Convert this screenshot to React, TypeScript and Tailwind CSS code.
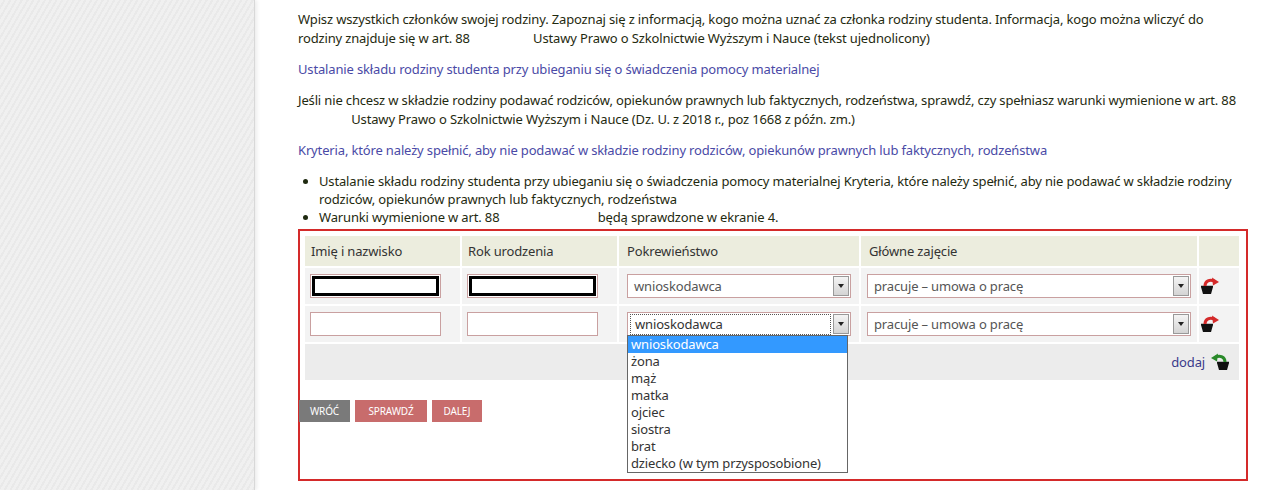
const font = { fontFamily: '"Noto Sans", "DejaVu Sans", sans-serif' };

function Arrow({ color, flip }: { color: string; flip?: boolean }) {
  return (
    <svg width="22" height="20" viewBox="0 0 22 20" style={flip ? { transform: "scaleX(-1)" } : undefined}>
      <path d="M2 11 h12 l-2 7 h-8 z" fill="#111" />
      <path d="M2 10.5 h12" stroke="#111" strokeWidth="1.5" />
      <path d="M6 10 C6 5 11 3 15 5" stroke={color} strokeWidth="3" fill="none" />
      <path d="M13 1.5 L20 6 L14 9.5 z" fill={color} />
    </svg>
  );
}

function Select({ value, focus }: { value: string; focus?: boolean }) {
  return (
    <div className="flex h-[24px] items-center border border-[#c9a0a0] bg-white">
      <div className={`flex-1 mx-[2px] px-[4px] text-[13px] ${focus ? "border border-dotted border-[#555] text-[#333]" : "text-[#555]"}`}>{value}</div>
      <div className="flex h-[20px] w-[16px] mr-[1px] items-center justify-center border border-[#999] bg-gradient-to-b from-[#f4f4f4] to-[#d4d4d4]">
        <div className="h-0 w-0 border-l-[3px] border-r-[3px] border-t-[4px] border-l-transparent border-r-transparent border-t-[#222]" />
      </div>
    </div>
  );
}

export default function App() {
  const options = ["wnioskodawca", "żona", "mąż", "matka", "ojciec", "siostra", "brat", "dziecko (w tym przysposobione)"];
  return (
    <div className="flex h-[490px] w-[1280px] overflow-hidden bg-white text-[13px] tracking-[-0.15px] text-[#1f2a10]" style={font}>
      <div className="w-[255px] shrink-0 border-r border-[#d8d8d8] bg-[repeating-linear-gradient(120deg,#f0f0f0_0px,#f0f0f0_3px,#e9e9e9_3px,#e9e9e9_5px)] shadow-[2px_0_4px_rgba(0,0,0,0.08)]" />
      <div className="ml-[43px] w-[950px] pt-[10px] leading-[19px]">
        <p>Wpisz wszystkich członków swojej rodziny. Zapoznaj się z informacją, kogo można uznać za członka rodziny studenta. Informacja, kogo można wliczyć do rodziny znajduje się w art. 88<span className="inline-block w-[60px]" /> Ustawy Prawo o Szkolnictwie Wyższym i Nauce (tekst ujednolicony)</p>
        <p className="mt-[12px] text-[#4a4aa6]">Ustalanie składu rodziny studenta przy ubieganiu się o świadczenia pomocy materialnej</p>
        <p className="mt-[12px]">Jeśli nie chcesz w składzie rodziny podawać rodziców, opiekunów prawnych lub faktycznych, rodzeństwa, sprawdź, czy spełniasz warunki wymienione w art. 88<span className="inline-block w-[50px]" /> Ustawy Prawo o Szkolnictwie Wyższym i Nauce (Dz. U. z 2018 r., poz 1668 z późn. zm.)</p>
        <p className="mt-[12px] text-[#4a4aa6]">Kryteria, które należy spełnić, aby nie podawać w składzie rodziny rodziców, opiekunów prawnych lub faktycznych, rodzeństwa</p>
        <ul className="mt-[12px] list-disc pl-[21px] leading-[18px]">
          <li>Ustalanie składu rodziny studenta przy ubieganiu się o świadczenia pomocy materialnej Kryteria, które należy spełnić, aby nie podawać w składzie rodziny rodziców, opiekunów prawnych lub faktycznych, rodzeństwa</li>
          <li>Warunki wymienione w art. 88<span className="inline-block w-[95px]" /> będą sprawdzone w ekranie 4.</li>
        </ul>
        <div className="relative mt-[3px] h-[252px] border-2 border-[#d42a2a] p-[3px]">
          <table className="w-[938px] border-separate border-spacing-[2px]">
            <thead>
              <tr className="h-[30px] bg-[#ecedde] text-left text-[13px] text-[#333]">
                <th className="w-[155px] px-[6px] font-normal">Imię i nazwisko</th>
                <th className="w-[155px] px-[6px] font-normal">Rok urodzenia</th>
                <th className="w-[240px] px-[8px] font-normal">Pokrewieństwo</th>
                <th className="w-[336px] px-[8px] font-normal">Główne zajęcie</th>
                <th />
              </tr>
            </thead>
            <tbody>
              {[0, 1].map((r) => (
                <tr key={r} className="h-[36px] bg-[#f3f3f3]">
                  <td className="px-[5px]">
                    <div className="h-[24px] w-[131px] border border-[#c9a0a0] bg-white p-[1px]">
                      {r === 0 && <div className="h-full border-[3px] border-black" />}
                    </div>
                  </td>
                  <td className="px-[5px]">
                    <div className="h-[24px] w-[131px] border border-[#c9a0a0] bg-white p-[1px]">
                      {r === 0 && <div className="h-full border-[3px] border-black" />}
                    </div>
                  </td>
                  <td className="px-[8px]"><Select value="wnioskodawca" focus={r === 1} /></td>
                  <td className="px-[6px]"><Select value="pracuje – umowa o pracę" /></td>
                  <td className="text-center"><Arrow color="#d42a2a" /></td>
                </tr>
              ))}
              <tr className="h-[36px] bg-[#ececec]">
                <td colSpan={5} className="pr-[8px] text-right">
                  <span className="inline-flex items-center gap-[4px] text-[#3a3a8a]">dodaj <Arrow color="#2a8a2a" flip /></span>
                </td>
              </tr>
            </tbody>
          </table>
          <div className="ml-[-4px] mt-[18px] flex gap-[5px] text-[10px] leading-[22px] text-white">
            <span className="w-[51px] bg-[#7a7a7a] text-center">WRÓĆ</span>
            <span className="w-[72px] bg-[#c86c6c] text-center">SPRAWDŹ</span>
            <span className="w-[50px] bg-[#c86c6c] text-center">DALEJ</span>
          </div>
          <div className="absolute left-[327px] top-[104px] w-[221px] border border-[#666] bg-white text-[13px] leading-[17px] text-[#333]">
            {options.map((o, i) => (
              <div key={o} className={`px-[3px] ${i === 0 ? "bg-[#3399ff] text-white" : ""}`}>{o}</div>
            ))}
          </div>
        </div>
      </div>
    </div>
  );
}
